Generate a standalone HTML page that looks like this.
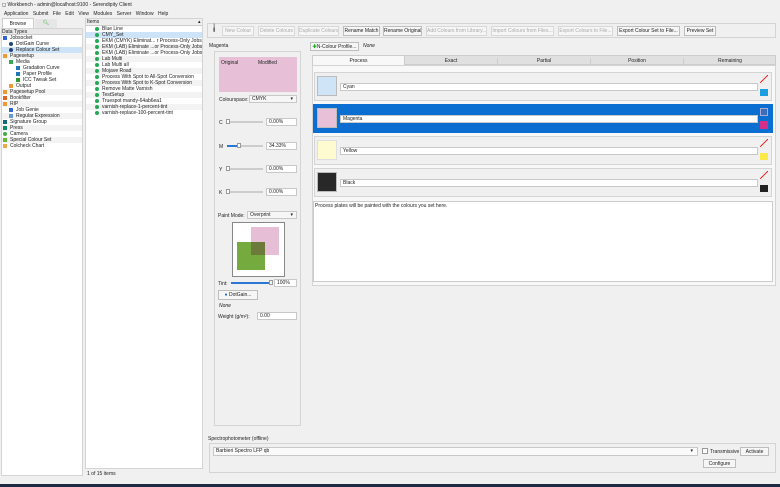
<!DOCTYPE html>
<html><head><meta charset="utf-8"><style>
*{box-sizing:border-box;margin:0;padding:0}
body{width:780px;height:487px;overflow:hidden;background:#f0f0f0;font-family:"Liberation Sans",sans-serif;font-size:5px;color:#222;position:relative}
.a{position:absolute}
.b{position:absolute;border:1px solid #d4d4d4}
.btn{position:absolute;border:1px solid #bdbdbd;background:#f6f6f6;font-size:5px;line-height:8px;text-align:center;white-space:nowrap;overflow:hidden}
.dis{color:#aaa;border-color:#d8d8d8}
.t{position:absolute;white-space:nowrap;font-size:5px;line-height:6px}
.ic{display:inline-block;width:4px;height:4px;margin-right:3px;vertical-align:-0.5px}
.in{position:absolute;background:#fff;border:1px solid #c8c8c8;font-size:5px;line-height:6px;padding-left:2px;white-space:nowrap}
.lst{white-space:nowrap;overflow:hidden}
.lst div{height:6px;overflow:hidden}
</style></head><body>
<div class="t" style="left:2px;top:2px;width:200px">◻ Workbench - admin@localhost:9100 - Serendipity Client</div>
<div class="t" style="left:4px;top:11px;word-spacing:3px">Application Submit File Edit View Modules Server Window Help</div>

<!-- left panel -->
<div class="a" style="left:2px;top:18px;width:32px;height:10px;background:#fff;border:1px solid #ccc;border-bottom:none;text-align:center;line-height:10px">Browse</div>
<div class="a" style="left:35px;top:19px;width:22px;height:9px;background:#e6e6e6;color:#3a3;text-align:center;line-height:9px">🔍︎</div>
<div class="b" style="left:1px;top:28px;width:82px;height:448px;background:#fff"></div>
<div class="a" style="left:2px;top:29px;width:80px;height:6px;background:#e8e8e8;border-bottom:1px solid #ccc"></div>
<div class="t" style="left:2px;top:29px">Data Types</div>
<div class="a lst" style="left:2px;top:35px;width:80px;line-height:6px">
<div style="padding-left:1px"><span class="ic" style="background:#36c"></span>Jobsocket</div>
<div style="padding-left:7px"><span class="ic" style="background:#247;border-radius:50%"></span>DotGain Curve</div>
<div style="padding-left:7px;background:#cde3f7"><span class="ic" style="background:#247;border-radius:50%"></span>Replace Colour Set</div>
<div style="padding-left:1px;background:#f3f3f3"><span class="ic" style="background:#e93"></span>Pagesetup</div>
<div style="padding-left:7px"><span class="ic" style="background:#3a5"></span>Media</div>
<div style="padding-left:14px"><span class="ic" style="background:#27b"></span>Gradation Curve</div>
<div style="padding-left:14px"><span class="ic" style="background:#27b"></span>Paper Profile</div>
<div style="padding-left:14px"><span class="ic" style="background:#393"></span>ICC Tweak Set</div>
<div style="padding-left:7px"><span class="ic" style="background:#e93"></span>Output</div>
<div style="padding-left:1px;background:#f3f3f3"><span class="ic" style="background:#e93"></span>Pagesetup Pool</div>
<div style="padding-left:1px"><span class="ic" style="background:#d62"></span>Bookfilter</div>
<div style="padding-left:1px;background:#f3f3f3"><span class="ic" style="background:#e93"></span>RIP</div>
<div style="padding-left:7px"><span class="ic" style="background:#36c"></span>Job Genie</div>
<div style="padding-left:7px;background:#f3f3f3"><span class="ic" style="background:#69c"></span>Regular Expression</div>
<div style="padding-left:1px"><span class="ic" style="background:#167"></span>Signature Group</div>
<div style="padding-left:1px;background:#f3f3f3"><span class="ic" style="background:#186"></span>Press</div>
<div style="padding-left:1px"><span class="ic" style="background:#4a4;border-radius:50%"></span>Camera</div>
<div style="padding-left:1px;background:#f3f3f3"><span class="ic" style="background:#6b3"></span>Special Colour Set</div>
<div style="padding-left:1px"><span class="ic" style="background:#ea4"></span>Colcheck Chart</div>
</div>

<!-- items -->
<div class="b" style="left:85px;top:18px;width:118px;height:451px;background:#fff"></div>
<div class="a" style="left:86px;top:19px;width:116px;height:7px;background:#eee;border-bottom:1px solid #ccc"></div>
<div class="t" style="left:87px;top:19px">Items</div><div class="t" style="left:198px;top:19px">▴</div>
<div class="a lst" style="left:86px;top:26px;width:116px;line-height:6px">
<div style="padding-left:9px"><span class="ic" style="background:#2a5;border-radius:50%"></span>Blue Line</div>
<div style="padding-left:9px;background:#cde3f7"><span class="ic" style="background:#2a5;border-radius:50%"></span>CMY_Set</div>
<div style="padding-left:9px"><span class="ic" style="background:#2a5;border-radius:50%"></span>EKM (CMYK) Eliminat... r Process-Only Jobs</div>
<div style="padding-left:9px;background:#f3f3f3"><span class="ic" style="background:#2a5;border-radius:50%"></span>EKM (LAB) Eliminate ...or Process-Only Jobs</div>
<div style="padding-left:9px"><span class="ic" style="background:#2a5;border-radius:50%"></span>EKM (LAB) Eliminate ...or Process-Only Jobs</div>
<div style="padding-left:9px;background:#f3f3f3"><span class="ic" style="background:#2a5;border-radius:50%"></span>Lab Multi</div>
<div style="padding-left:9px"><span class="ic" style="background:#2a5;border-radius:50%"></span>Lab Multi all</div>
<div style="padding-left:9px;background:#f3f3f3"><span class="ic" style="background:#2a5;border-radius:50%"></span>Mojave Road</div>
<div style="padding-left:9px"><span class="ic" style="background:#2a5;border-radius:50%"></span>Process With Spot to All-Spot Conversion</div>
<div style="padding-left:9px;background:#f3f3f3"><span class="ic" style="background:#2a5;border-radius:50%"></span>Process With Spot to K-Spot Conversion</div>
<div style="padding-left:9px"><span class="ic" style="background:#2a5;border-radius:50%"></span>Remove Matte Varnish</div>
<div style="padding-left:9px;background:#f3f3f3"><span class="ic" style="background:#2a5;border-radius:50%"></span>TestSetup</div>
<div style="padding-left:9px"><span class="ic" style="background:#2a5;border-radius:50%"></span>Truespot mandy-64ab6ea1</div>
<div style="padding-left:9px;background:#f3f3f3"><span class="ic" style="background:#2a5;border-radius:50%"></span>varnish-replace-1-percent-tint</div>
<div style="padding-left:9px"><span class="ic" style="background:#2a5;border-radius:50%"></span>varnish-replace-100-percent-tint</div>
</div>
<div class="t" style="left:87px;top:471px">1 of 15 items</div>

<!-- toolbar -->
<div class="b" style="left:207px;top:23px;width:569px;height:15px"></div>
<div class="t" style="left:212px;top:26px;font-size:7px">╽</div>
<div class="btn dis" style="left:222px;top:26px;width:32px">New Colour</div>
<div class="btn dis" style="left:258px;top:26px;width:37px">Delete Colours</div>
<div class="btn dis" style="left:298px;top:26px;width:41px">Duplicate Colours</div>
<div class="btn" style="left:343px;top:26px;width:37px">Rename Match</div>
<div class="btn" style="left:383px;top:26px;width:39px">Rename Original</div>
<div class="btn dis" style="left:426px;top:26px;width:61px">Add Colours from Library...</div>
<div class="btn dis" style="left:491px;top:26px;width:63px">Import Colours from Files...</div>
<div class="btn dis" style="left:558px;top:26px;width:55px">Export Colours to File...</div>
<div class="btn" style="left:617px;top:26px;width:63px">Export Colour Set to File...</div>
<div class="btn" style="left:684px;top:26px;width:32px">Preview Set</div>

<!-- left editor column -->
<div class="t" style="left:209px;top:43px">Magenta</div>
<div class="b" style="left:214px;top:51px;width:87px;height:375px"></div>
<div class="a" style="left:219px;top:57px;width:78px;height:35px;background:#e7c0d8"></div>
<div class="t" style="left:221px;top:60px">Original</div><div class="t" style="left:258px;top:60px">Modified</div>
<div class="t" style="left:219px;top:97px">Colourspace:</div>
<div class="in" style="left:249px;top:95px;width:48px;height:8px;background:#f6f6f6">CMYK<span style="position:absolute;right:3px">▾</span></div>
<div class="t" style="left:219px;top:120px">C</div><div class="a" style="left:227px;top:121px;width:36px;height:2px;background:#ccc"></div><div class="a" style="left:226px;top:119px;width:4px;height:5px;background:#fff;border:1px solid #999"></div><div class="in" style="left:266px;top:118px;width:31px;height:8px">0.00%</div>
<div class="t" style="left:219px;top:144px">M</div><div class="a" style="left:227px;top:145px;width:36px;height:2px;background:#ccc"></div><div class="a" style="left:227px;top:145px;width:11px;height:2px;background:#2a78d4"></div><div class="a" style="left:237px;top:143px;width:4px;height:5px;background:#fff;border:1px solid #999"></div><div class="in" style="left:266px;top:142px;width:31px;height:8px">34.33%</div>
<div class="t" style="left:219px;top:167px">Y</div><div class="a" style="left:227px;top:168px;width:36px;height:2px;background:#ccc"></div><div class="a" style="left:226px;top:166px;width:4px;height:5px;background:#fff;border:1px solid #999"></div><div class="in" style="left:266px;top:165px;width:31px;height:8px">0.00%</div>
<div class="t" style="left:219px;top:190px">K</div><div class="a" style="left:227px;top:191px;width:36px;height:2px;background:#ccc"></div><div class="a" style="left:226px;top:189px;width:4px;height:5px;background:#fff;border:1px solid #999"></div><div class="in" style="left:266px;top:188px;width:31px;height:8px">0.00%</div>
<div class="t" style="left:218px;top:213px">Paint Mode:</div>
<div class="in" style="left:247px;top:211px;width:50px;height:8px;background:#f6f6f6">Overprint<span style="position:absolute;right:3px">▾</span></div>
<div class="a" style="left:232px;top:222px;width:53px;height:55px;background:#fff;border:1px solid #888"></div>
<div class="a" style="left:251px;top:227px;width:28px;height:28px;background:#e6bfd6"></div>
<div class="a" style="left:237px;top:242px;width:28px;height:28px;background:#75ab3e"></div>
<div class="a" style="left:251px;top:242px;width:14px;height:13px;background:#6e7a3a"></div>
<div class="t" style="left:218px;top:281px">Tint:</div><div class="a" style="left:231px;top:282px;width:40px;height:2px;background:#2a78d4"></div><div class="a" style="left:269px;top:280px;width:4px;height:5px;background:#fff;border:1px solid #999"></div><div class="in" style="left:274px;top:279px;width:23px;height:8px">100%</div>
<div class="btn" style="left:218px;top:290px;width:40px;height:10px;line-height:8px"><span style="color:#1a6fd0">●</span> DotGain...</div>
<div class="t" style="left:219px;top:303px;font-style:italic">None</div>
<div class="t" style="left:218px;top:314px">Weight (g/m²):</div><div class="in" style="left:257px;top:312px;width:40px;height:8px">0.00</div>

<!-- right area -->
<div class="btn" style="left:310px;top:42px;width:49px;height:9px"><span style="color:#2a2;font-weight:bold">✚</span>N-Colour Profile...</div>
<div class="t" style="left:363px;top:43px;font-style:italic">None</div>
<div class="a" style="left:312px;top:55px;width:464px;height:10px;background:#e0e0e0;border:1px solid #ccc"></div>
<div class="a" style="left:312px;top:55px;width:93px;height:11px;background:#f8f8f8;border:1px solid #ccc;border-bottom:none;text-align:center;line-height:10px">Process</div>
<div class="t" style="left:405px;top:58px;width:92px;text-align:center">Exact</div>
<div class="t" style="left:497px;top:58px;width:93px;text-align:center;border-left:1px solid #ccc">Partial</div>
<div class="t" style="left:590px;top:58px;width:93px;text-align:center;border-left:1px solid #ccc">Position</div>
<div class="t" style="left:683px;top:58px;width:93px;text-align:center;border-left:1px solid #ccc">Remaining</div>
<div class="b" style="left:312px;top:65px;width:464px;height:221px;background:#f8f8f8"></div>

<div class="b" style="left:314px;top:72px;width:458px;height:29px;background:#f0f0f0"></div>
<div class="a" style="left:317px;top:76px;width:20px;height:20px;background:#cfe4f7;border:1px solid #bbb"></div>
<div class="in" style="left:340px;top:83px;width:418px;height:8px">Cyan</div>
<div class="a" style="left:760px;top:75px;width:8px;height:8px;background:linear-gradient(135deg,transparent 44%,#e33 45%,#e33 55%,transparent 56%)"></div>
<div class="a" style="left:760px;top:89px;width:8px;height:7px;background:#1a9ede"></div>

<div class="a" style="left:313px;top:104px;width:460px;height:29px;background:#0a6fd0"></div>
<div class="a" style="left:317px;top:108px;width:20px;height:20px;background:#e8c0d8;border:1px solid #bbb"></div>
<div class="in" style="left:340px;top:115px;width:418px;height:8px">Magenta</div>
<div class="a" style="left:760px;top:108px;width:8px;height:8px;background:#3a6cc0;border:1px solid #aac"></div>
<div class="a" style="left:760px;top:121px;width:8px;height:8px;background:#d4308a"></div>

<div class="b" style="left:314px;top:136px;width:458px;height:29px;background:#f0f0f0"></div>
<div class="a" style="left:317px;top:140px;width:20px;height:20px;background:#fffbd0;border:1px solid #ddd"></div>
<div class="in" style="left:340px;top:147px;width:418px;height:8px">Yellow</div>
<div class="a" style="left:760px;top:139px;width:8px;height:8px;background:linear-gradient(135deg,transparent 44%,#e33 45%,#e33 55%,transparent 56%)"></div>
<div class="a" style="left:760px;top:153px;width:8px;height:7px;background:#fbe948"></div>

<div class="b" style="left:314px;top:168px;width:458px;height:29px;background:#f0f0f0"></div>
<div class="a" style="left:317px;top:172px;width:20px;height:20px;background:#282828;border:1px solid #bbb"></div>
<div class="in" style="left:340px;top:179px;width:418px;height:8px">Black</div>
<div class="a" style="left:760px;top:171px;width:8px;height:8px;background:linear-gradient(135deg,transparent 44%,#e33 45%,#e33 55%,transparent 56%)"></div>
<div class="a" style="left:760px;top:185px;width:8px;height:7px;background:#222"></div>

<div class="a" style="left:313px;top:201px;width:460px;height:81px;background:#fff;border:1px solid #ccc"></div>
<div class="t" style="left:315px;top:203px">Process plates will be painted with the colours you set here.</div>

<!-- spectro -->
<div class="t" style="left:208px;top:436px">Spectrophotometer (offline)</div>
<div class="b" style="left:209px;top:443px;width:567px;height:30px"></div>
<div class="in" style="left:213px;top:447px;width:485px;height:9px;background:#fafafa">Barbieri Spectro LFP qb<span style="position:absolute;right:4px">▾</span></div>
<div class="a" style="left:702px;top:448px;width:6px;height:6px;background:#fff;border:1px solid #999"></div>
<div class="t" style="left:710px;top:449px">Transmissive</div>
<div class="btn" style="left:740px;top:447px;width:29px;height:9px">Activate</div>
<div class="btn" style="left:703px;top:459px;width:33px;height:9px">Configure</div>

<div class="a" style="left:0;top:484px;width:780px;height:3px;background:#1c2a44"></div>
</body></html>
